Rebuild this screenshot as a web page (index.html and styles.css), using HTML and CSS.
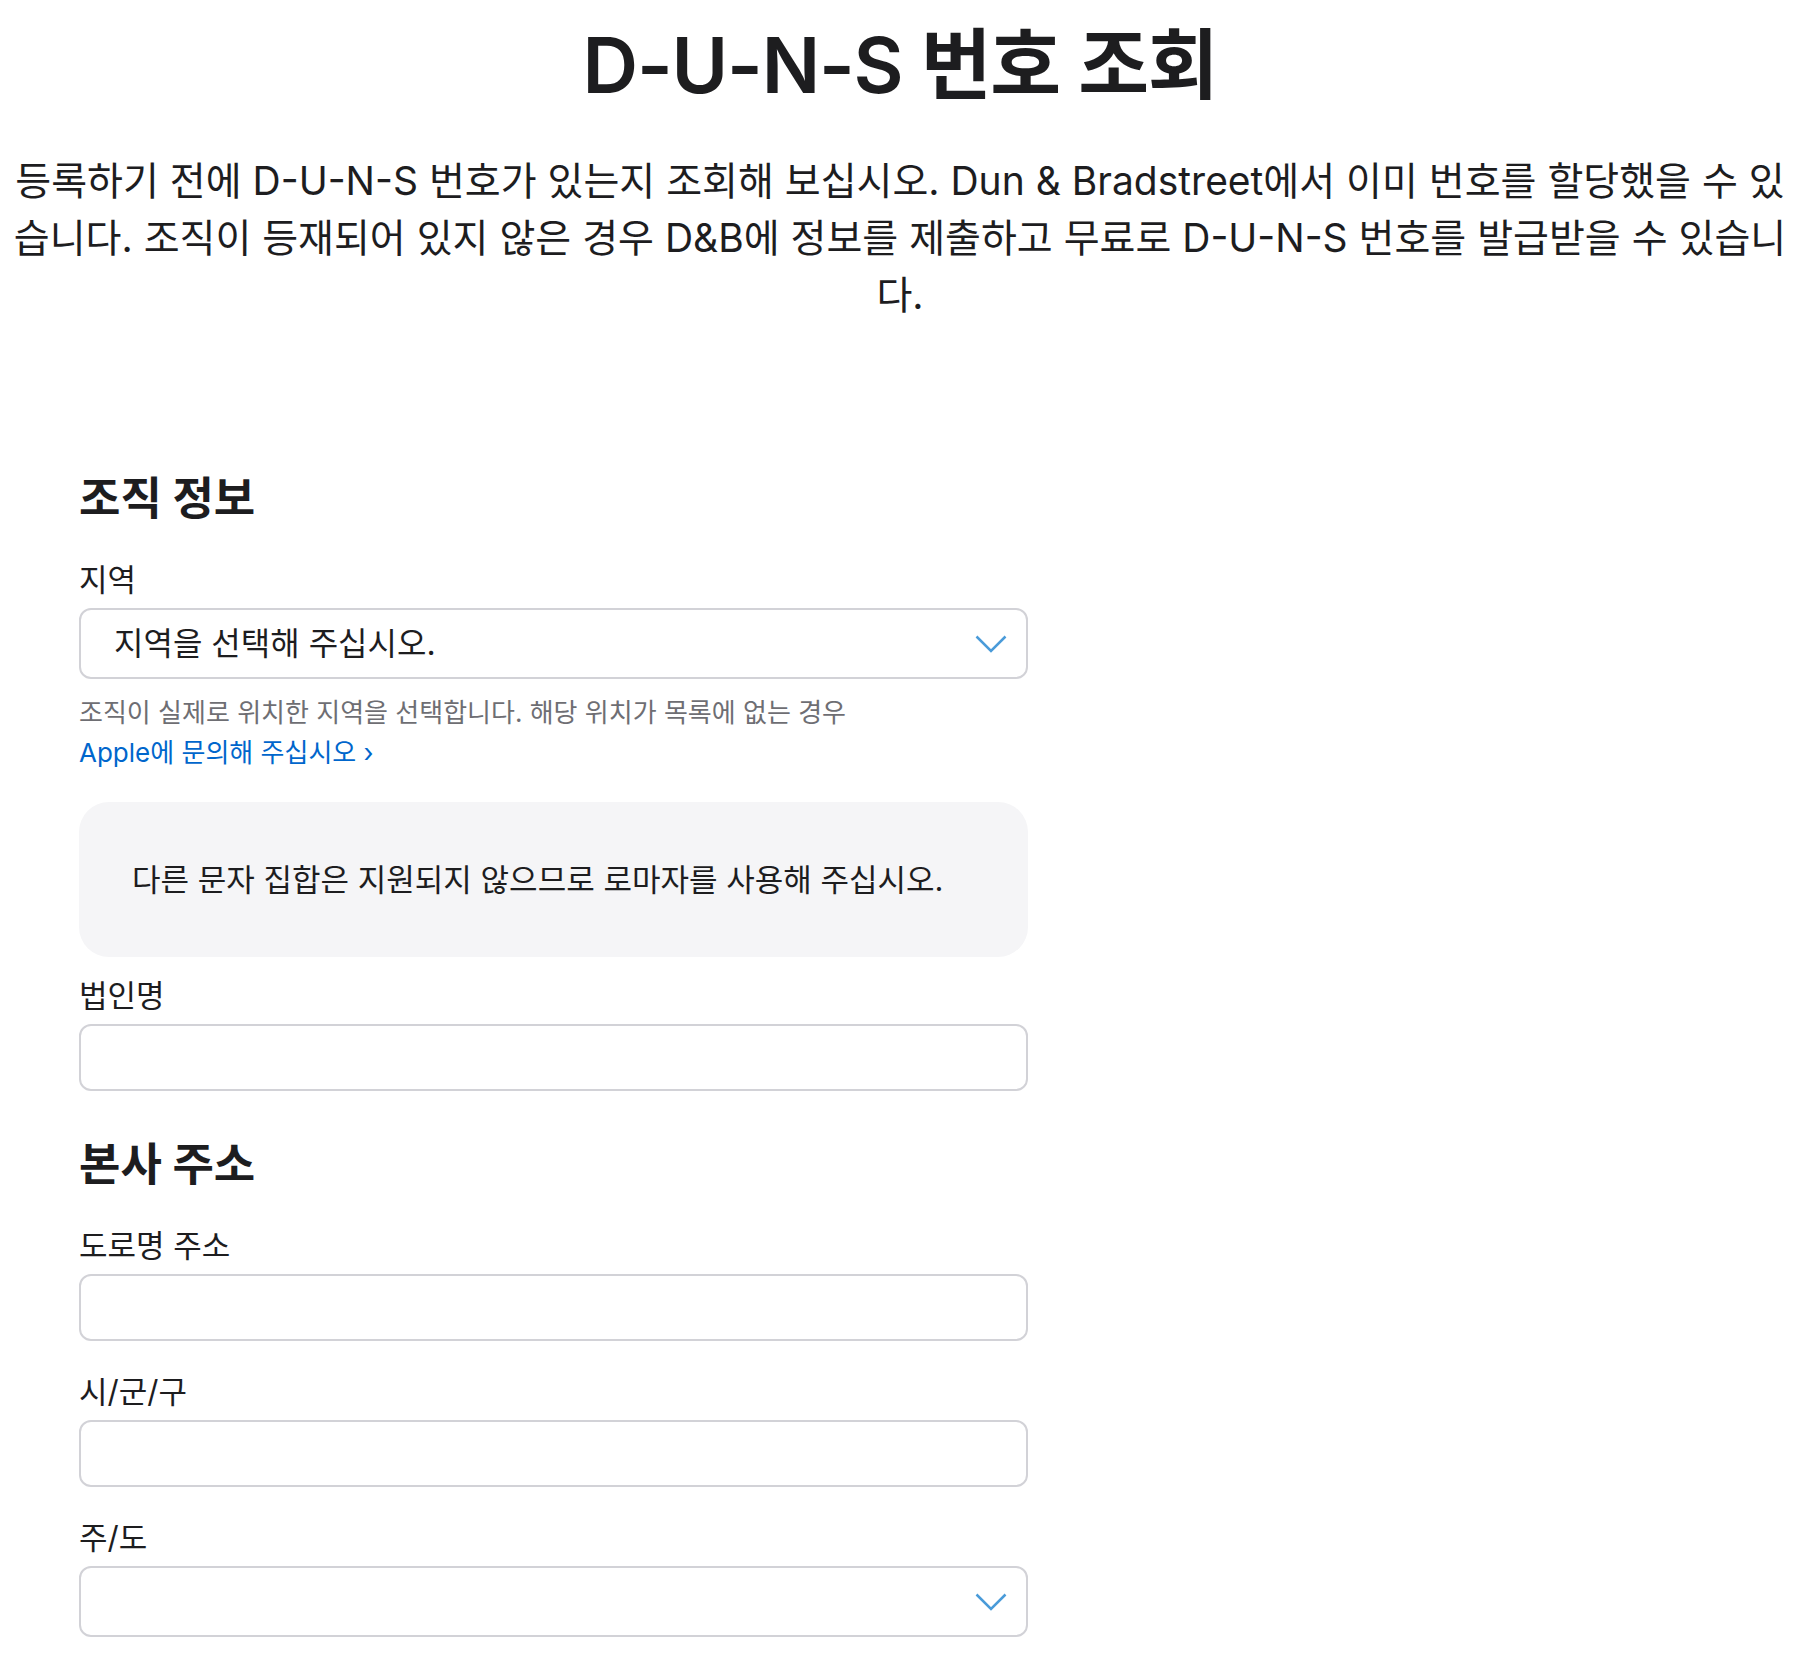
FILE: index.html
```html
<!DOCTYPE html>
<html lang="ko">
<head>
    <meta charset="UTF-8">
    <meta name="viewport" content="width=device-width, initial-scale=1.0">
    <title>D-U-N-S 번호 조회</title>
    <link rel="stylesheet" href="styles.css">
</head>
<body>
    <main class="page">
        <header class="intro">
            <h1>D-U-N-S 번호 조회</h1>
            <p>등록하기 전에 D-U-N-S 번호가 있는지 조회해 보십시오. Dun &amp; Bradstreet에서 이미 번호를 할당했을 수 있습니다. 조직이 등재되어 있지 않은 경우 D&amp;B에 정보를 제출하고 무료로 D-U-N-S 번호를 발급받을 수 있습니다.</p>
        </header>

        <form class="lookup-form">
            <section class="form-section">
                <h2>조직 정보</h2>

                <div class="field">
                    <label for="region">지역</label>
                    <div class="select-wrap">
                        <select id="region">
                            <option>지역을 선택해 주십시오.</option>
                        </select>
                        <svg class="chevron" viewBox="0 0 32 18" aria-hidden="true">
                            <polyline points="1.5,1.5 16,16 30.5,1.5" />
                        </svg>
                    </div>
                    <p class="help">조직이 실제로 위치한 지역을 선택합니다. 해당 위치가 목록에 없는 경우<br>
                        <a href="#">Apple에 문의해 주십시오 ›</a></p>
                </div>

                <div class="notice">다른 문자 집합은 지원되지 않으므로 로마자를 사용해 주십시오.</div>

                <div class="field">
                    <label for="legal-name">법인명</label>
                    <input type="text" id="legal-name">
                </div>
            </section>

            <section class="form-section">
                <h2>본사 주소</h2>

                <div class="field">
                    <label for="street">도로명 주소</label>
                    <input type="text" id="street">
                </div>

                <div class="field">
                    <label for="city">시/군/구</label>
                    <input type="text" id="city">
                </div>

                <div class="field">
                    <label for="state">주/도</label>
                    <div class="select-wrap">
                        <select id="state">
                            <option></option>
                        </select>
                        <svg class="chevron" viewBox="0 0 32 18" aria-hidden="true">
                            <polyline points="1.5,1.5 16,16 30.5,1.5" />
                        </svg>
                    </div>
                </div>
            </section>
        </form>
    </main>
</body>
</html>
```

FILE: styles.css
```css
body {
    margin: 0;
    font-family: Inter, "Noto Sans CJK KR", sans-serif;
    color: #1d1d1f;
    background-color: white;
}

.page {
    padding: 20px 0 40px;
}

.intro {
    text-align: center;
}

.intro h1 {
    margin: 0;
    font-size: 77px;
    line-height: 90px;
    font-weight: 600;
    letter-spacing: -1.2px;
}

.intro p {
    margin: 42px 0 0;
    font-size: 39px;
    line-height: 57px;
}

.lookup-form {
    width: 949px;
    margin: 152px 0 0 79px;
}

.form-section h2 {
    margin: 0 0 40px;
    font-size: 45px;
    line-height: 48px;
    font-weight: 700;
}

.form-section + .form-section {
    margin-top: 50px;
}

.field {
    display: flex;
    flex-direction: column;
}

.field + .field {
    margin-top: 34px;
}

.field label {
    font-size: 31px;
    line-height: 34px;
    margin-bottom: 11px;
}

.select-wrap {
    position: relative;
}

select,
input[type="text"] {
    box-sizing: border-box;
    width: 100%;
    margin: 0;
    border: 2px solid #d2d2d7;
    border-radius: 12px;
    background-color: white;
    font-family: inherit;
    color: #1d1d1f;
}

select {
    appearance: none;
    height: 71px;
    padding: 0 80px 0 33px;
    font-size: 32px;
}

input[type="text"] {
    height: 67px;
    padding: 0 20px;
    font-size: 31px;
}

.chevron {
    position: absolute;
    right: 21px;
    top: 27px;
    width: 32px;
    height: 18px;
    fill: none;
    stroke: #4a9bd9;
    stroke-width: 2.5;
    pointer-events: none;
}

.help {
    margin: 14px 0 0;
    font-size: 26px;
    line-height: 40px;
    color: #6e6e73;
}

.help a {
    color: #0066cc;
    text-decoration: none;
}

.notice {
    margin: 29px 0 22px;
    padding: 58px 53px;
    border-radius: 30px;
    background-color: #f5f5f7;
    font-size: 31px;
    line-height: 39px;
}
```
